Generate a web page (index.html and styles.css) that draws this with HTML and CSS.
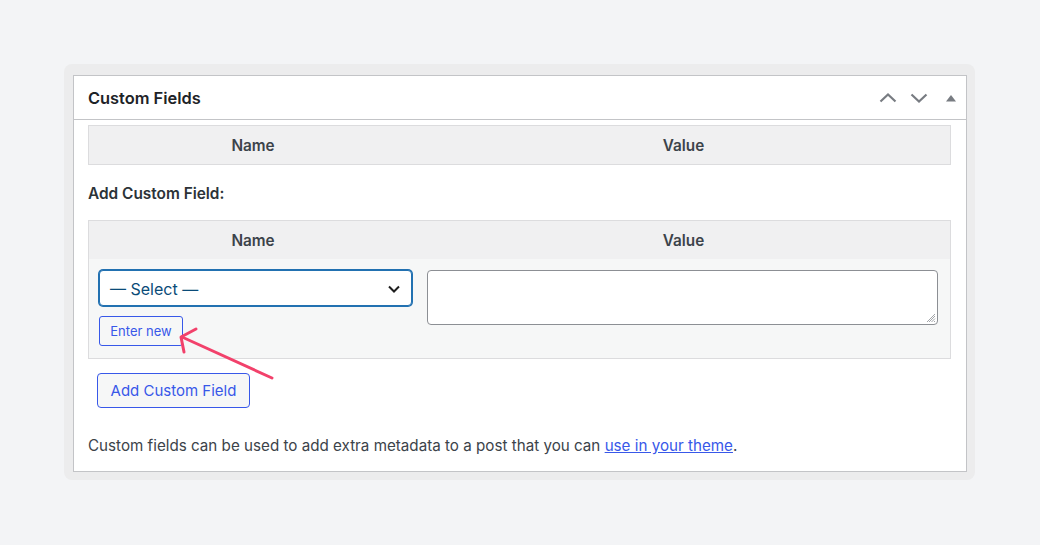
FILE: index.html
```html
<!DOCTYPE html>
<html lang="en">
<head>
<meta charset="utf-8">
<title>Custom Fields</title>
<link rel="stylesheet" href="styles.css">
</head>
<body>
<div class="stage">
  <div class="frame">
    <div class="postbox">
      <div class="postbox-header">
        <h2 class="title">Custom Fields</h2>
        <div class="handles">
          <svg class="h-icon" width="20" height="20" viewBox="0 0 20 20"><path d="M2.5 13.5 L10 6.5 L17.5 13.5" fill="none" stroke="#787c82" stroke-width="2.2"/></svg>
          <svg class="h-icon" width="20" height="20" viewBox="0 0 20 20"><path d="M2.5 6.5 L10 13.5 L17.5 6.5" fill="none" stroke="#787c82" stroke-width="2.2"/></svg>
          <svg class="h-tri" width="12" height="12" viewBox="0 0 12 12"><path d="M1 9.5 L6 3 L11 9.5 Z" fill="#787c82"/></svg>
        </div>
      </div>
      <div class="inside">
        <div class="table">
          <div class="thead">
            <div class="th">Name</div>
            <div class="th">Value</div>
          </div>
        </div>

        <p class="subhead">Add Custom Field:</p>

        <div class="table">
          <div class="thead">
            <div class="th">Name</div>
            <div class="th">Value</div>
          </div>
          <div class="tbody">
            <div class="td name-cell">
              <div class="select">
                <span>— Select —</span>
                <svg width="16" height="16" viewBox="0 0 16 16"><path d="M3 5.5 L8 10.5 L13 5.5" fill="none" stroke="#1e1e1e" stroke-width="2"/></svg>
              </div>
              <button class="btn btn-small">Enter new</button>
            </div>
            <div class="td value-cell">
              <div class="textarea">
                <svg class="grip" width="10" height="10" viewBox="0 0 10 10"><path d="M9 3 L3 9 M9 5.5 L5.5 9 M9 8 L8 9 M9 1 L1 9" stroke="#8c8f94" stroke-width="0.8"/></svg>
              </div>
            </div>
          </div>
        </div>

        <div class="submit-row">
          <button class="btn btn-large">Add Custom Field</button>
        </div>

        <p class="note">Custom fields can be used to add extra metadata to a post that you can <a href="#">use in your theme</a>.</p>
      </div>
    </div>
  </div>
  <svg class="arrow" width="1040" height="545" viewBox="0 0 1040 545">
    <g fill="none" stroke="#f2416b" stroke-width="3" stroke-linecap="round" stroke-linejoin="round">
      <path d="M272 378 L182 337"/>
      <path d="M196 329 L181 337 L184 352"/>
    </g>
  </svg>
</div>
</body>
</html>
```

FILE: styles.css
```css
* { box-sizing: border-box; }

html, body {
  margin: 0;
  padding: 0;
}

body {
  background: #f3f4f6;
  font-family: "Inter", "Liberation Sans", Arial, sans-serif;
  color: #3c434a;
  width: 1040px;
  height: 545px;
  overflow: hidden;
}

.stage {
  position: relative;
  padding: 64px 65px 0 64px;
}

.frame {
  background: #ececed;
  border-radius: 8px;
  padding: 11px 8px 8px 9px;
  height: 416px;
}

.postbox {
  background: #fff;
  border: 1px solid #c3c4c7;
  height: 397px;
}

.postbox-header {
  height: 44px;
  border-bottom: 1px solid #c3c4c7;
  display: flex;
  align-items: center;
  justify-content: space-between;
  padding: 0 9px 0 14px;
}

.title {
  margin: 0;
  font-size: 16.4px;
  font-weight: 600;
  color: #1d2327;
}

.handles {
  display: flex;
  align-items: center;
  gap: 11px;
}

.h-tri {
  margin-left: 5px;
}

.inside {
  padding: 5px 15px 0 14px;
}

.table {
  border: 1px solid #dcdcde;
}

.thead {
  display: grid;
  grid-template-columns: 328px 1fr;
  background: #f0f0f1;
  height: 38px;
}

.th {
  display: flex;
  align-items: center;
  justify-content: center;
  font-size: 15.3px;
  font-weight: 600;
  color: #3c434a;
}

.subhead {
  margin: 0;
  height: 55px;
  display: flex;
  align-items: center;
  font-size: 15.4px;
  font-weight: 600;
  color: #2c3338;
  padding-top: 1px;
}

.tbody {
  display: grid;
  grid-template-columns: 328px 1fr;
  background: #f6f7f7;
  height: 99px;
}

.name-cell {
  padding: 11px 5px 0 10px;
}

.select {
  height: 36px;
  width: 313px;
  border: 1px solid #2271b1;
  box-shadow: 0 0 0 1px #2271b1;
  border-radius: 4px;
  background: #fff;
  display: flex;
  align-items: center;
  justify-content: space-between;
  padding: 1px 9px 0 10px;
  font-size: 16px;
  color: #0a4b78;
}

.btn {
  font-family: inherit;
  background: #f6f7f7;
  border: 1px solid #3858e9;
  color: #3858e9;
  border-radius: 3px;
  cursor: pointer;
}

.btn-small {
  margin-top: 10px;
  height: 30px;
  width: 84px;
  font-size: 13px;
  padding: 0;
}

.value-cell {
  padding: 11px 12px 0 10px;
}

.textarea {
  position: relative;
  height: 55px;
  border: 1px solid #8c8f94;
  border-radius: 4px;
  background: #fff;
}

.grip {
  position: absolute;
  right: 1px;
  bottom: 1px;
}

.submit-row {
  padding: 14px 0 0 9px;
}

.btn-large {
  height: 35px;
  width: 153px;
  font-size: 15px;
  border-radius: 4px;
  padding: 0;
}

.note {
  margin: 28px 0 0 0;
  font-size: 15.2px;
  color: #3c434a;
}

.note a {
  color: #3858e9;
  text-decoration: underline;
}

.arrow {
  position: absolute;
  top: 0;
  left: 0;
  pointer-events: none;
}
```
